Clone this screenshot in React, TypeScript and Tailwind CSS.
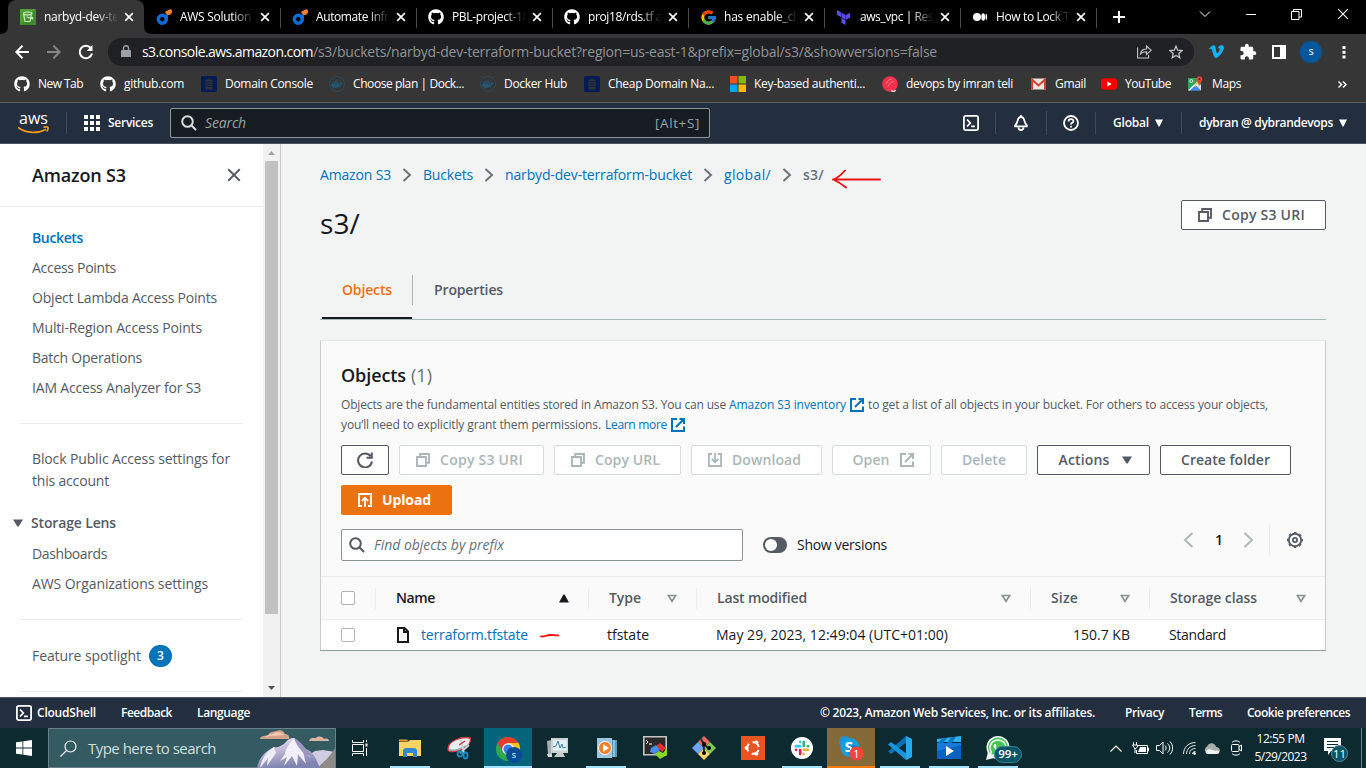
import { useLayoutEffect, useRef, useState } from "react";
import type { ReactNode } from "react";
import { FaDocker, FaGithub, FaVimeoV, FaWhatsapp } from "react-icons/fa";
import { MdExtension } from "react-icons/md";
import { FcGoogle } from "react-icons/fc";
import { SiTerraform } from "react-icons/si";

/* One line of text whose tracking is adjusted so that it fills exactly `w` pixels. */
function Fit({ w, className = "", children }: { w: number; className?: string; children: string }) {
  const ref = useRef<HTMLSpanElement>(null);
  const [spacing, setSpacing] = useState(0);
  useLayoutEffect(() => {
    const el = ref.current;
    if (!el) return;
    const natural = el.getBoundingClientRect().width;
    setSpacing((w - natural) / children.length);
  }, [w, children]);
  return (
    <span className={`block shrink-0 overflow-visible whitespace-nowrap ${className}`} style={{ width: w }}>
      <span ref={ref} className="inline-block whitespace-pre" style={{ letterSpacing: spacing }}>
        {children}
      </span>
    </span>
  );
}

/* ---------- browser chrome ---------- */

const Ocean = () => (
  <svg width="16" height="16" viewBox="0 0 16 16">
    <circle cx="6.300" cy="10.200" r="3.900" fill="none" stroke="#0c6ad8" strokeWidth="3.600" />
    <path d="M8.500 5.500h3.500v6H8.500z" fill="#0c6ad8" />
    <circle cx="6.300" cy="10.400" r="2" fill="#000" />
    <path d="M9.500 2.500 14 .3c1.500-.5 2 .8 2 2.300C16 5 14.500 6 12.800 6 10.500 6 9 4.500 9.500 2.500z" fill="#ff8126" />
  </svg>
);

const Bucket = () => (
  <svg width="16" height="16" viewBox="0 0 16 16">
    <path d="M0 0h16v16H0z" fill="#3c8c2a" />
    <path d="M0 0h16L0 16z" fill="#4fa034" />
    <path d="M3.500 4.500 5 12.500h5l1.500-8M3.500 4.500c0-2 8.500-2 8.500 0s-8.500 1.700-8.500 0zM7 8l5 1.800c1.500.3 1-.8-.5-1.800" fill="none" stroke="#d3edc9" strokeWidth="1.100" />
  </svg>
);

const MediumDots = () => (
  <svg width="16" height="16" viewBox="0 0 16 16" fill="#fff">
    <circle cx="5" cy="8" r="4" />
    <ellipse cx="11.200" cy="8" rx="1.900" ry="3.700" />
    <ellipse cx="14.300" cy="8" rx=".8" ry="3.300" />
  </svg>
);

const Cross = ({ size = 8, weight = 1.7 }: { size?: number; weight?: number }) => (
  <svg width={size} height={size} viewBox="0 0 10 10" stroke="currentColor" strokeWidth={weight * (10 / size)} fill="none" className="shrink-0 overflow-visible">
    <path d="M.2.2l9.600 9.600M9.800.2l-9.600 9.600" />
  </svg>
);

const gh = <FaGithub size={16} color="#fff" />;

const tabs: { icon: ReactNode; label: string; w: number }[] = [
  { icon: <Bucket />, label: "narbyd-dev-terr", w: 84 },
  { icon: <Ocean />, label: "AWS Solution", w: 71 },
  { icon: <Ocean />, label: "Automate Infra", w: 79 },
  { icon: gh, label: "PBL-project-18", w: 77 },
  { icon: gh, label: "proj18/rds.tf at", w: 78 },
  { icon: <FcGoogle size={17} />, label: "has enable_clas", w: 84 },
  { icon: <SiTerraform size={15} color="#5c4ee5" />, label: "aws_vpc | Reso", w: 80 },
  { icon: <MediumDots />, label: "How to Lock Te", w: 80 },
];

function TabStrip() {
  return (
    <div className="flex h-[34px] shrink-0 bg-black pl-2">
      {tabs.map((t, i) => (
        <div
          key={t.label}
          className={`relative flex h-[34px] w-[136px] shrink-0 items-center pl-3 ${i === 0 ? "rounded-t-lg bg-[#363636]" : ""}`}
        >
          <span className="flex w-6 shrink-0">{t.icon}</span>
          <span className="w-[74px] shrink-0 overflow-hidden text-xs text-white [mask-image:linear-gradient(to_right,black_70%,transparent_100%)]">
            <Fit w={t.w}>{t.label}</Fit>
          </span>
          <span className="ml-[7px] flex text-white"><Cross /></span>
          {i > 0 && <span className="absolute top-2 right-[-1px] h-5 w-px bg-[#4a4a4a]" />}
          {i === 0 && (
            <svg className="absolute bottom-0 -left-2" width="152" height="8" viewBox="0 0 152 8" fill="#363636">
              <path d="M0 8Q8 8 8 0V8zM152 8Q144 8 144 0V8z" />
            </svg>
          )}
        </div>
      ))}
      <svg className="mt-[11px] ml-[17px]" width="12" height="12" viewBox="0 0 12 12" stroke="#fff" strokeWidth="2">
        <path d="M6 0v12M0 6h12" />
      </svg>
      <svg className="mt-[11px] ml-[74px]" width="12" height="8" viewBox="0 0 12 8" stroke="#fff" fill="none">
        <path d="M1 .5l5 5 5-5" />
      </svg>
      <svg className="mt-[14px] ml-[35px]" width="10" height="1" viewBox="0 0 10 1" fill="#fff"><path d="M0 0h10v1H0z" /></svg>
      <svg className="mt-[9px] ml-[35px]" width="11" height="11" viewBox="0 0 11 11" stroke="#fff" fill="none">
        <path d="M.5 2.500h7.500v8H.5zM2.500 2.500V.5h8v7.500H8" />
      </svg>
      <span className="mt-[9px] ml-[36px] text-white"><Cross size={10} weight={1.1} /></span>
    </div>
  );
}

function Toolbar() {
  return (
    <div className="flex h-[35px] shrink-0 items-center bg-[#363636] pl-[15px]">
      <svg width="14" height="14" viewBox="0 0 14 14" fill="none" stroke="#fff" strokeWidth="2"><path d="M14 7H1.500M7.500.8 1.300 7l6.200 6.200" /></svg>
      <svg className="ml-[18px]" width="14" height="14" viewBox="0 0 14 14" fill="none" stroke="#868686" strokeWidth="2"><path d="M0 7h12.500M6.500.8 12.700 7l-6.200 6.200" /></svg>
      <svg className="ml-[17px]" width="16" height="16" viewBox="0 0 16 16" fill="none" stroke="#fff" strokeWidth="2"><path d="M12.700 4A6.200 6.200 0 1 0 14 9.500" /><path d="M14.500 1v6h-6z" fill="#fff" stroke="none" /></svg>
      <div className="ml-[14px] flex h-7 w-[1086px] items-center rounded-full bg-[#202124] pl-[13px]">
        <svg width="10" height="13" viewBox="0 0 10 13" fill="#9aa0a6"><path d="M1 5h8a1 1 0 0 1 1 1v6H0V6a1 1 0 0 1 1-1z" /><path d="M2.500 5V3.200a2.500 2.500 0 0 1 5 0V5" fill="none" stroke="#9aa0a6" strokeWidth="1.400" /></svg>
        <Fit w={171} className="ml-[11px] text-sm text-white">s3.console.aws.amazon.com</Fit>
        <Fit w={624} className="text-sm text-[#929395]">/s3/buckets/narbyd-dev-terraform-bucket?region=us-east-1&amp;prefix=global/s3/&amp;showversions=false</Fit>
        <svg className="ml-[200px]" width="15" height="15" viewBox="0 0 15 15" fill="none" stroke="#c4c5c7" strokeWidth="1.100"><path d="M.6 3.500v10.500h11v-3M3.500 10C4 6.500 6.500 5 9.500 5V2l4.700 4.300-4.700 4.200V7.800C7 7.800 5 8.300 3.500 10z" /></svg>
        <svg className="ml-[17px]" width="14" height="14" viewBox="0 0 24 24" fill="none" stroke="#c4c5c7" strokeWidth="2.200"><path d="M12 2l3 7 7.500.700-5.700 5 1.700 7.300-6.500-3.900L5.500 22l1.700-7.300-5.700-5L9 9z" /></svg>
      </div>
      <FaVimeoV className="ml-[14px]" size={17} color="#13b1ef" />
      <MdExtension className="ml-[14px]" size={18} color="#fff" />
      <svg className="ml-[15px]" width="14" height="14" viewBox="0 0 14 14" fill="#fff"><path fillRule="evenodd" d="M0 0h14v14H0zM2 2v10h6V2z" /></svg>
      <span className="ml-[14px] flex size-[22px] items-center justify-center rounded-full bg-[#01579b] pb-px text-[11px] text-white">s</span>
      <svg className="ml-5" width="4" height="14" viewBox="0 0 4 14" fill="#fff"><path d="M.5 1h3v3h-3zM.5 5.700h3v3h-3zM.5 10.500h3v3h-3z" /></svg>
    </div>
  );
}

const Namecheap = () => (
  <svg width="16" height="16" viewBox="0 0 16 16">
    <rect width="16" height="16" rx="2" fill="#031a52" />
    <path d="M5 4h6v9H5zM6.500 3h3" fill="#303238" stroke="#303238" />
    <path d="M5 6h6M5 8.200h6M5 10.500h6" stroke="#031a52" strokeWidth=".7" />
  </svg>
);

const DockerBadge = () => (
  <span className="flex size-4 items-center justify-center rounded-full border border-[#2b4a5e]"><FaDocker size={12} color="#255370" /></span>
);

const bookmarks: { icon: ReactNode; label: string; w: number; cell: string }[] = [
  { icon: gh, label: "New Tab", w: 45, cell: "w-[86px]" },
  { icon: gh, label: "github.com", w: 60, cell: "w-[101px]" },
  { icon: <Namecheap />, label: "Domain Console", w: 88, cell: "w-[128px]" },
  { icon: <DockerBadge />, label: "Choose plan | Dock...", w: 111, cell: "w-[151px]" },
  { icon: <DockerBadge />, label: "Docker Hub", w: 63, cell: "w-[104px]" },
  { icon: <Namecheap />, label: "Cheap Domain Na...", w: 106, cell: "w-[146px]" },
  {
    icon: (
      <svg width="16" height="16" viewBox="0 0 16 16"><path d="M0 0h7.500v7.500H0z" fill="#f25022" /><path d="M8.500 0H16v7.500H8.500z" fill="#7fba00" /><path d="M0 8.500h7.500V16H0z" fill="#00a4ef" /><path d="M8.500 8.500H16V16H8.500z" fill="#ffb900" /></svg>
    ),
    label: "Key-based authenti...", w: 111, cell: "w-[152px]",
  },
  {
    icon: (
      <svg width="16" height="16" viewBox="0 0 16 16"><circle cx="8" cy="8" r="7.800" fill="#f3304c" /><path d="M4 8c1-3 3-4.500 6-5M6 10.500c1-3 3-4.500 6-5" stroke="#fa8b9a" strokeWidth=".8" fill="none" /><path d="M9 14.500c2 1.500 4 1 4.500-.5" stroke="#dbe6e8" strokeWidth="1.300" fill="none" /></svg>
    ),
    label: "devops by imran teli", w: 107, cell: "w-[149px]",
  },
  {
    icon: (
      <svg width="15" height="16" viewBox="0 0 15 16"><path d="M0 2.500h15v11H0z" fill="#e9e7e3" /><path d="M1 13.500v-10l6.500 6 6.500-6v10" fill="none" stroke="#d93f33" strokeWidth="2" /></svg>
    ),
    label: "Gmail", w: 31, cell: "w-[70px]",
  },
  {
    icon: <svg width="16" height="16" viewBox="0 0 16 16"><rect y="2.300" width="16" height="11.500" rx="3" fill="#f00" /><path d="M6.300 5.600v5l4.400-2.500z" fill="#fff" /></svg>,
    label: "YouTube", w: 46, cell: "w-[87px]",
  },
  {
    icon: (
      <svg width="15" height="16" viewBox="0 0 15 16"><path d="M0 2h13v12.500H0z" fill="#2fa35b" /><path d="M0 14.500 6.500 8l6.500 6.500z" fill="#4285f4" /><path d="M5.500 9 12 2.500V7L7 11z" fill="#f3d14d" /><path d="m6.500 8 6.500 6.500V9l-3-1z" fill="#dadce0" /><path d="m0 14.500 6-6 1 1-5 5z" fill="#eef1f3" /><path d="M11.300 10C10.500 7 8.500 6 8.500 3.200a2.900 2.900 0 0 1 5.800 0C14.300 6 12 7 11.300 10z" fill="#e0443a" /><circle cx="11.300" cy="3" r="1" fill="#7a1c1b" /><circle cx="3.300" cy="5" r="1.500" stroke="#fff" fill="none" strokeWidth=".8" /></svg>
    ),
    label: "Maps", w: 29, cell: "w-[150px]",
  },
];

function Bookmarks() {
  return (
    <div className="flex h-[34px] shrink-0 items-center border-b border-[#626262] bg-[#363636] pb-[3px] pl-[14px]">
      {bookmarks.map((b, i) => (
        <div key={i} className={`flex shrink-0 items-center ${b.cell}`}>
          <span className="flex w-6 shrink-0">{b.icon}</span>
          <Fit w={b.w} className="text-xs text-white">{b.label}</Fit>
        </div>
      ))}
      <svg width="9" height="7" viewBox="0 0 9 7" fill="none" stroke="#fff" strokeWidth="1.500"><path d="m.5.5 3 3-3 3M5 .5l3 3-3 3" /></svg>
    </div>
  );
}

/* ---------- AWS console ---------- */

const Caret = ({ className = "", width = 10 }: { className?: string; width?: number }) => (
  <svg className={`shrink-0 ${className}`} width={width} height="8" viewBox="0 0 10 8" preserveAspectRatio="none" fill="currentColor"><path d="M0 .5h10L5.600 7.500H4.400z" /></svg>
);

const ShellIcon = () => (
  <svg className="shrink-0" width="16" height="16" viewBox="0 0 16 16" fill="none" stroke="#fff" strokeWidth="1.800">
    <rect x=".9" y=".9" width="14.200" height="14.200" rx="1.800" /><path d="M4 4.500 7.300 8 4 11.500M8 11.300h4" />
  </svg>
);

const SearchIcon = ({ color }: { color: string }) => (
  <svg className="shrink-0" width="16" height="16" viewBox="0 0 16 16" fill="none" stroke={color} strokeWidth="2"><circle cx="6.500" cy="6.500" r="5.300" /><path d="m10.300 10.300 4.700 4.700" /></svg>
);

const CopyIcon = () => (
  <svg className="shrink-0" width="14" height="14" viewBox="0 0 14 14" fill="none" stroke="currentColor" strokeWidth="1.900"><path d="M1 4h9v9H1zM4.200 4V1H13v8.800h-3" /></svg>
);

const ExternalIcon = ({ className = "" }: { className?: string }) => (
  <svg className={`shrink-0 ${className}`} width="14" height="14" viewBox="0 0 14 14" fill="none" stroke="currentColor" strokeWidth="2"><path d="M6 1H1v12h12V8.500M8.500 1H13v5M13 1 5 9" /></svg>
);

function Header() {
  return (
    <header className="flex h-[41px] shrink-0 items-center border-b border-[#4b5360] bg-[#232f3e] pl-[18px] text-white">
      <div className="mt-px flex w-[31px] flex-col items-center">
        <Fit w={29} className="h-[13px] text-base leading-[11px] font-medium">aws</Fit>
        <svg width="32" height="8" viewBox="0 0 32 8" fill="none" stroke="#f79a1e" strokeWidth="1.700"><path d="M0 1.500c9 6.500 20 6 28 2M25.500 1.200c5-.8 5.500-.4 3.500 4.300" /></svg>
      </div>
      <span className="ml-[17px] h-[22px] w-px bg-[#414b58]" />
      <svg className="ml-[17px]" width="16" height="16" viewBox="0 0 16 16" fill="#fff"><path d="M0 0h4v4H0zM6 0h4v4H6zM12 0h4v4h-4zM0 6h4v4H0zM6 6h4v4H6zM12 6h4v4h-4zM0 12h4v4H0zM6 12h4v4H6zM12 12h4v4h-4z" /></svg>
      <Fit w={45} className="ml-2 text-xs font-semibold">Services</Fit>
      <div className="ml-[17px] flex h-[30px] w-[540px] items-center rounded-xs border border-[#8d9799] bg-[#171b22] pl-[10px]">
        <SearchIcon color="#d8dcdc" />
        <Fit w={41} className="ml-[8px] text-sm text-[#95a5a6] italic">Search</Fit>
        <Fit w={45} className="ml-[409px] text-[13.500px] text-[#95a5a6]">[Alt+S]</Fit>
      </div>
      <div className="ml-[253px] flex"><ShellIcon /></div>
      <span className="ml-[16px] h-[22px] w-px bg-[#414b58]" />
      <svg className="ml-[17px]" width="16" height="16" viewBox="0 0 16 16" fill="none" stroke="#fff" strokeWidth="1.800"><path d="M8 0v1.500M1.300 11.300h13.400M1.600 11.100C3.500 9.500 4 8 4.500 6 5 3.500 6 2 8 2s3 1.500 3.500 4c.5 2 1 3.500 2.900 5.100M5.500 12.500a2.500 2.500 0 0 0 5 0" /></svg>
      <span className="ml-[17px] h-[24px] w-px bg-[#414b58]" />
      <svg className="ml-[16px]" width="16" height="16" viewBox="0 0 16 16" fill="none" stroke="#fff" strokeWidth="1.800"><circle cx="8" cy="8" r="7" /><path d="M5.600 6.500c0-3.200 4.900-3 4.800-.3C10.400 8 8 7.700 8 9.500M8 10.800v1.700" /></svg>
      <span className="ml-[16px] h-[22px] w-px bg-[#414b58]" />
      <Fit w={36} className="ml-[17px] text-xs font-semibold">Global</Fit>
      <Caret className="ml-[6px]" width={8} />
      <span className="ml-[18px] h-[22px] w-px bg-[#414b58]" />
      <Fit w={134} className="ml-[17px] text-xs font-semibold">dybran @ dybrandevops</Fit>
      <Caret className="ml-[6px]" width={8} />
    </header>
  );
}

const navTop: [string, number][] = [
  ["Access Points", 84],
  ["Object Lambda Access Points", 185],
  ["Multi-Region Access Points", 170],
  ["Batch Operations", 110],
  ["IAM Access Analyzer for S3", 169],
];

function Sidebar() {
  return (
    <aside className="flex h-[553px] w-[281px] shrink-0 bg-white text-sm text-[#545b64]">
      <div className="h-full w-[263px] overflow-hidden">
        <div className="flex h-[63px] items-center justify-between border-b border-[#eaeded] pr-[23px] pl-8 text-[#545b64]">
          <Fit w={94} className="-mt-px text-lg font-semibold text-[#16191f]">Amazon S3</Fit>
          <Cross size={12} weight={1.9} />
        </div>
        <div className="mt-[16px] flex h-[30px] items-center pl-8"><Fit w={51} className="font-semibold text-[#0073bb]">Buckets</Fit></div>
        {navTop.map(([label, w]) => (
          <div key={label} className="flex h-[30px] items-center pl-8"><Fit w={w}>{label}</Fit></div>
        ))}
        <div className="mx-5 mt-[20px] h-px bg-[#eaeded]" />
        <div className="mt-[24px] pl-8 leading-[22px]">
          <Fit w={198}>Block Public Access settings for</Fit>
          <Fit w={77}>this account</Fit>
        </div>
        <div className="mt-[16px] flex h-[30px] items-center pl-[13px]">
          <Caret />
          <Fit w={85} className="ml-2 font-semibold">Storage Lens</Fit>
        </div>
        <div className="mt-px flex h-[30px] items-center pl-8"><Fit w={75}>Dashboards</Fit></div>
        <div className="flex h-[30px] items-center pl-8"><Fit w={176}>AWS Organizations settings</Fit></div>
        <div className="mx-5 mt-[20px] h-px bg-[#eaeded]" />
        <div className="mt-[24px] flex h-[24px] items-center pl-8">
          <Fit w={109} className="-mt-px">Feature spotlight</Fit>
          <span className="ml-2 flex h-[22px] w-[23px] items-center justify-center rounded-full bg-[#0073bb] text-xs font-semibold text-white">3</span>
        </div>
        <div className="mx-5 mt-[23px] h-px bg-[#eaeded]" />
      </div>
      <div className="flex w-[17px] flex-col items-center bg-[#f1f1f1]">
        <svg className="mt-[7px]" width="7" height="4" viewBox="0 0 7 4" fill="#a3a3a3"><path d="M0 4 3.500 0 7 4z" /></svg>
        <div className="mt-[6px] h-[453px] w-[13px] bg-[#c1c1c1]" />
        <svg className="mt-[72px]" width="7" height="4" viewBox="0 0 7 4" fill="#505050"><path d="M0 0h7L3.500 4z" /></svg>
      </div>
      <div className="w-px bg-[#c5caca]" />
    </aside>
  );
}

const Chevron = () => (
  <svg className="w-8 shrink-0" height="14" viewBox="0 0 32 14" fill="none" stroke="#687078" strokeWidth="1.900"><path d="m12.500 1 6.500 6-6.500 6" /></svg>
);

function Button({ w, tw, icon, after, children, disabled }: { w: string; tw: number; icon?: ReactNode; after?: ReactNode; children: string; disabled?: boolean }) {
  return (
    <button className={`flex h-[30px] shrink-0 items-center justify-center rounded-xs border bg-white text-sm font-semibold ${w} ${icon ? "pr-1" : ""} ${after ? "pl-[3px]" : ""} ${disabled ? "border-[#d5dbdb] text-[#aab7b8]" : "border-[#545b64] text-[#545b64]"}`}>
      {icon && <span className="mr-[10px] flex">{icon}</span>}
      <Fit w={tw} className="text-left">{children}</Fit>
      {after}
    </button>
  );
}

const Sort = ({ up }: { up?: boolean }) => (
  <svg className="shrink-0" width="10" height="9" viewBox="0 0 10 9" fill="none" stroke="#879596" strokeWidth="1.700">
    {up ? <path d="M0 8.500 4.400.5h1.200L10 8.500z" fill="#16191f" stroke="none" /> : <path d="M1.300 1.500h7.400L5 7.300z" />}
  </svg>
);

function HeadCell({ label, w, cell, up, last }: { label: string; w: number; cell: string; up?: boolean; last?: boolean }) {
  return (
    <div className={`flex h-[21px] shrink-0 items-center justify-between border-l border-[#eaeded] pl-5 ${last ? "pr-[18px]" : "pr-[19px]"} ${cell} ${up ? "text-[#16191f]" : "text-[#545b64]"}`}>
      <Fit w={w} className="font-semibold">{label}</Fit>
      <Sort up={up} />
    </div>
  );
}

const Box = () => <span className="-mt-px size-[14px] shrink-0 rounded-xs border border-[#aab7b8] bg-white" />;

function ObjectsCard() {
  return (
    <section className="mt-[20px] h-[311px] w-[1006px] border border-t-[#e6e9e9] border-r-[#c9cfcf] border-b-2 border-l-[#c9cfcf] border-b-[#8e9b9b] bg-[#fafafa] text-sm text-[#16191f]">
      <div className="flex h-[67px] items-center pl-5">
        <Fit w={65} className="text-lg font-semibold">Objects</Fit>
        <Fit w={21} className="ml-[5px] text-lg text-[#687078]">(1)</Fit>
      </div>
      <div className="-mt-[13px] pl-5 text-xs text-[#545b64]">
        <div className="flex h-5 items-center">
          <Fit w={385}>Objects are the fundamental entities stored in Amazon S3. You can use</Fit>
          <span className="ml-[3px] flex items-center text-[#0073bb]"><Fit w={117}>Amazon S3 inventory</Fit><ExternalIcon className="ml-[4px]" /></span>
          <Fit w={400} className="ml-[4px]">to get a list of all objects in your bucket. For others to access your objects,</Fit>
        </div>
        <div className="flex h-5 items-center">
          <Fit w={260}>you’ll need to explicitly grant them permissions.</Fit>
          <span className="ml-[4px] flex items-center text-[#0073bb]"><Fit w={62}>Learn more</Fit><ExternalIcon className="ml-[4px]" /></span>
        </div>
      </div>
      <div className="mt-[10px] flex flex-wrap gap-[10px] pl-5">
        <button className="flex h-[30px] w-12 items-center justify-center rounded-xs border border-[#545b64] bg-white">
          <svg width="16" height="16" viewBox="0 0 16 16" fill="none" stroke="#545b64" strokeWidth="2"><path d="M15 9.500A7 7 0 1 1 13.700 4.200M14.800.5v5.300H9.500" /></svg>
        </button>
        <Button w="w-[145px]" tw={83} disabled icon={<CopyIcon />}>Copy S3 URI</Button>
        <Button w="w-[127px]" tw={65} disabled icon={<CopyIcon />}>Copy URL</Button>
        <Button w="w-[131px]" tw={69} disabled icon={<svg width="14" height="14" viewBox="0 0 14 14" fill="none" stroke="currentColor" strokeWidth="1.800"><path d="M4 1H1v12h12V1h-3M7 0v9M3.800 6 7 9.300 10.200 6" /></svg>}>Download</Button>
        <Button w="w-[99px]" tw={37} disabled after={<ExternalIcon className="ml-[10px]" />}>Open</Button>
        <Button w="w-[86px]" tw={44} disabled>Delete</Button>
        <Button w="w-[113px]" tw={51} after={<Caret className="ml-3" />}>Actions</Button>
        <Button w="w-[131px]" tw={89}>Create folder</Button>
        <button className="flex h-[30px] w-[111px] items-center rounded-xs bg-[#ec7211] pl-[17px] text-sm font-bold text-white">
          <svg width="14" height="14" viewBox="0 0 14 14" fill="none" stroke="#fff" strokeWidth="1.800"><path d="M4 13H1V1h12v12h-3M7 14V5M3.800 8 7 4.700 10.200 8" /></svg>
          <Fit w={49} className="ml-[10px] text-left">Upload</Fit>
        </button>
      </div>
      <div className="mt-[14px] flex h-8 items-center pl-5">
        <div className="flex h-8 w-[402px] items-center rounded-xs border border-[#879596] bg-white pl-[7px]">
          <SearchIcon color="#545b64" />
          <Fit w={130} className="ml-[9px] text-[#687078] italic">Find objects by prefix</Fit>
        </div>
        <span className="ml-5 flex h-4 w-6 items-center rounded-full bg-[#545b64] pl-0.5"><span className="size-3 rounded-full bg-white" /></span>
        <Fit w={90} className="ml-[10px]">Show versions</Fit>
        <div className="ml-[296px] flex h-[30px] -translate-y-[5px] items-center">
          <svg width="11" height="16" viewBox="0 0 11 16" fill="none" stroke="#aab7b8" strokeWidth="1.900"><path d="M9.500 1 2 8l7.500 7" /></svg>
          <Fit w={8} className="ml-[21px] font-semibold">1</Fit>
          <svg className="ml-[20px]" width="11" height="16" viewBox="0 0 11 16" fill="none" stroke="#aab7b8" strokeWidth="1.900"><path d="M1.500 1 9 8l-7.500 7" /></svg>
          <span className="ml-[15px] h-[30px] w-px bg-[#eaeded]" />
          <svg className="ml-[17px]" width="16" height="16" viewBox="0 0 16 16" fill="none" stroke="#545b64">
            <circle cx="8" cy="8" r="6.200" strokeWidth="1.900" />
            <circle cx="8" cy="8" r="7.400" strokeWidth="1.200" strokeDasharray="2.700 3.112" strokeDashoffset="1.350" />
            <circle cx="8" cy="8" r="2.100" strokeWidth="1.800" />
          </svg>
        </div>
      </div>
      <div className="mt-[15px] flex h-[44px] items-center border-y border-[#eaeded]">
        <div className="flex w-[54px] shrink-0 pl-5"><Box /></div>
        <HeadCell label="Name" w={39} cell="w-[213px]" up />
        <HeadCell label="Type" w={32} cell="w-[108px]" />
        <HeadCell label="Last modified" w={90} cell="w-[334px]" />
        <HeadCell label="Size" w={27} cell="w-[119px]" />
        <HeadCell label="Storage class" w={87} cell="w-[175px]" last />
      </div>
      <div className="flex h-[30px] items-center bg-white">
        <div className="flex w-[76px] shrink-0 pl-5"><Box /></div>
        <div className="flex w-[211px] shrink-0 items-center">
          <svg width="12" height="16" viewBox="0 0 12 16" fill="none" stroke="#16191f" strokeWidth="2"><path d="M1 1h6.500L11 4.500V15H1zM7 1v4h4" /></svg>
          <Fit w={107} className="ml-[12px] text-[#0073bb]">terraform.tfstate</Fit>
          <svg className="ml-[12px]" width="20" height="6" viewBox="0 0 20 6" fill="none" stroke="#f50e0e" strokeWidth="1.800" strokeLinecap="round"><path d="M1 4.500c5 0 6-1.500 9-1.500s5 .5 8.500.3" /></svg>
        </div>
        <Fit w={42} className="-ml-px">tfstate</Fit>
        <Fit w={232} className="ml-[67px]">May 29, 2023, 12:49:04 (UTC+01:00)</Fit>
        <Fit w={57} className="ml-[125px]">150.7 KB</Fit>
        <Fit w={57} className="ml-[39px]">Standard</Fit>
      </div>
    </section>
  );
}

function Main() {
  return (
    <main className="h-[553px] flex-1 bg-[#f2f3f3] pt-[21px] pl-[39px]">
      <nav className="flex h-5 items-center text-sm text-[#0073bb]">
        <Fit w={71}>Amazon S3</Fit><Chevron />
        <Fit w={50}>Buckets</Fit><Chevron />
        <Fit w={187}>narbyd-dev-terraform-bucket</Fit><Chevron />
        <Fit w={47}>global/</Fit><Chevron />
        <Fit w={21} className="font-semibold text-[#687078]">s3/</Fit>
        <svg className="mt-[7px] ml-[8px]" width="50" height="20" viewBox="0 0 50 20" fill="none" stroke="#f01313" strokeWidth="1.900" strokeLinecap="round"><path d="M1 10.500h47M13 1.500C10 5 6 8.500 1.500 10.500c4 2 8 4.500 12.500 8" /></svg>
      </nav>
      <div className="mt-[15px] flex h-[51px] w-[1006px] justify-between">
        <Fit w={40} className="mt-[3px] text-[28px] leading-[40px] text-[#16191f]">s3/</Fit>
        <Button w="w-[145px]" tw={83} icon={<CopyIcon />}>Copy S3 URI</Button>
      </div>
      <div className="mt-[13px] flex h-[56px] w-[1006px] border-b border-[#aab7b8] pl-0.5 text-sm font-semibold">
        <div className="-mb-px flex h-[55px] w-[90px] items-center justify-center border-b-2 border-[#16191f] pt-[5px] pb-[7px] text-[#ec7211]">
          <Fit w={50}>Objects</Fit>
        </div>
        <span className="mt-[11px] h-[30px] w-px bg-[#aab7b8]" />
        <div className="ml-[21px] flex h-[55px] items-center pt-[5px] pb-[9px] text-[#545b64]"><Fit w={69}>Properties</Fit></div>
      </div>
      <ObjectsCard />
    </main>
  );
}

function Footer() {
  return (
    <footer className="flex h-[31px] shrink-0 items-center border-t border-[#4b5360] bg-[#232f3e] pl-4 text-xs font-semibold text-white">
      <ShellIcon />
      <Fit w={59} className="ml-[5px]">CloudShell</Fit>
      <Fit w={51} className="ml-[25px]">Feedback</Fit>
      <Fit w={53} className="ml-[25px]">Language</Fit>
      <Fit w={275} className="ml-[570px]">© 2023, Amazon Web Services, Inc. or its affiliates.</Fit>
      <Fit w={39} className="ml-[30px]">Privacy</Fit>
      <Fit w={33} className="ml-[25px]">Terms</Fit>
      <Fit w={103} className="ml-[25px]">Cookie preferences</Fit>
    </footer>
  );
}

/* ---------- taskbar ---------- */

const Mountains = () => (
  <svg width="78" height="38" viewBox="0 0 78 38">
    <defs>
      <linearGradient id="peak" x1="0" y1="0" x2="0.300" y2="1">
        <stop offset="0" stopColor="#ece8f5" /><stop offset=".45" stopColor="#c3bad9" /><stop offset="1" stopColor="#7f83ae" />
      </linearGradient>
    </defs>
    <path d="M3 9c0-3 5-4 8-3 1-5 6-4 8-5 5-2 8 0 9 3 4 0 5 4 4 5z" fill="#d3a28c" />
    <path d="M8 7c2-3 6-2 8-3 3-3 9-2 11 1-4 1-12 0-19 2z" fill="#f2c9ad" />
    <path d="M52 11c1-4 5-3 7-3 2-2 6-2 8 1 3-1 5 0 5 2z" fill="#dcb49d" />
    <path d="M44 30 58 21l8-1 12 2v16H44z" fill="#cfcbe0" />
    <path d="M0 38c2-10 7-16 17-21 4 1 7-1 11-4 4-5 7-5 9-5 6 4 8 10 16 13 6 6 7 11 10 17z" fill="url(#peak)" />
    <path d="M37 8c-4 6-8 9-9 16l-5 7 7-4-3 9 8-10 5 10 1-12 8 10-3-12 8 5c-6-6-10-14-17-19z" fill="#f3f0fa" />
    <path d="M17 17C9 22 5 28 3 38l8-10-1 8 9-13z" fill="#efecf6" />
    <path d="M37 8c2 7 7 12 11 17l7 1c-6-6-10-14-18-18z" fill="#9c96bf" />
    <path d="M61 38c4-6 10-8 17-20v20z" fill="#8e8a89" />
  </svg>
);

const Chrome = () => (
  <svg width="26" height="26" viewBox="0 0 26 26">
    <circle cx="12" cy="12" r="12" fill="#2da94f" />
    <path d="M12 12 1.600 6A12 12 0 0 1 22.400 6z" fill="#e33b2e" />
    <path d="M12 6h10.400A12 12 0 0 1 12 24l5-9z" fill="#fcc31e" />
    <path d="M1.600 6 7 15l5-9z" fill="#e33b2e" />
    <circle cx="12" cy="12" r="5.800" fill="#fff" /><circle cx="12" cy="12" r="4.600" fill="#3b7ded" />
    <circle cx="18" cy="18" r="8" fill="#074d94" />
    <text x="18" y="21" fontSize="9" textAnchor="middle" fill="#fff">s</text>
  </svg>
);

const Slack = () => (
  <svg width="22" height="22" viewBox="0 0 22 22" strokeWidth="2.700" strokeLinecap="round">
    <circle cx="11" cy="11" r="11" fill="#fff" />
    <path d="M5 9.200h4" stroke="#36c5f0" /><path d="M9.200 4.900v.1" stroke="#36c5f0" />
    <path d="M12.800 5v4" stroke="#2eb67d" /><path d="M17 9.200h.1" stroke="#2eb67d" />
    <path d="M13 12.800h4" stroke="#ecb22e" /><path d="M12.800 17v.1" stroke="#ecb22e" />
    <path d="M9.200 13v4" stroke="#e01e5a" /><path d="M5 12.800h.1" stroke="#e01e5a" />
  </svg>
);

const apps: { bg?: string; line?: string; icon: ReactNode }[] = [
  {
    line: "bg-[#a3e3ff] w-10",
    icon: <svg width="22" height="19" viewBox="0 0 22 19"><path d="M0 .5h8l2 2H0z" fill="#e3a01a" /><path d="M0 3h9l2-2h11v16H0z" fill="#fdd367" /><path d="M4 18v-7l2-2h10l2 2v7h-4v-4H8v4z" fill="#3288d2" /></svg>,
  },
  {
    icon: <svg width="25" height="24" viewBox="0 0 25 24"><path d="M1 13C1 5 15 0 23 2c2 5-4 11-14 13-4 1-8 1-8-2z" fill="#e9edf0" stroke="#d13c42" strokeWidth="1.300" /><path d="M2 13.500c4 2 12 0 17-4" stroke="#9ba8b2" strokeWidth="1.500" fill="none" /><path d="m14 4 3 13M22 9l-9 8" stroke="#c9cfd4" strokeWidth="1.800" /><path d="m12 9 6-4" stroke="#d13c42" strokeWidth="1.500" /><circle cx="13" cy="18" r="2.500" fill="none" stroke="#208bc6" strokeWidth="1.800" /><ellipse cx="18.500" cy="19.500" rx="2" ry="3" fill="none" stroke="#208bc6" strokeWidth="1.800" /></svg>,
  },
  { bg: "bg-[#07657b]", line: "bg-[#a3e3ff] w-12", icon: <span className="mt-[3px] ml-[2px]"><Chrome /></span> },
  {
    icon: <svg width="23" height="22" viewBox="0 0 23 22"><path d="M1 4l5-1v15H2z" fill="#a9afaf" /><path d="M5 1h17v15H5z" fill="#cbd2d4" /><path d="M7 3h13.500v10.500H7z" fill="#e3f0f7" /><path d="m7 10 3-1 2-5 2 7 2-4 1 4 3-1" fill="none" stroke="#3d7fae" /><path d="M11 16h6l2 4H8z" fill="#c5caca" /><path d="M1 17h5v3H2z" fill="#d4d8d8" /></svg>,
  },
  {
    line: "bg-[#a3e3ff] w-10",
    icon: <svg width="21" height="20" viewBox="0 0 21 20"><path d="M1 0h15v20H1z" fill="#9cc6df" /><path d="M16 2h5v17h-5z" fill="#519cbc" /><path d="M18 2v17" stroke="#cce8ef" /><circle cx="9" cy="10" r="6.500" fill="#f48024" stroke="#fff" /><path d="M7 6v8l6-4z" fill="#fff" /></svg>,
  },
  {
    icon: <svg width="25" height="24" viewBox="0 0 25 24"><path d="M.8.8h22.400v18H.8z" fill="#292929" stroke="#c5c5c5" strokeWidth="1.600" /><path d="m3 4 2 2-2 2M6 8h3" stroke="#fff" fill="none" /><path d="m13 10 4-3 6 5-4 4z" fill="#e63028" /><path d="m8 12 5-3 4 5-5 4-5-2z" fill="#4a8bf0" /><path d="m12 18 4-3 4 2 4-5v7l-7 4z" fill="#86d928" /></svg>,
  },
  {
    icon: <svg width="24" height="24" viewBox="0 0 24 24"><path d="m12 0 6 6-6 6-6-6z" fill="#f16a63" /><path d="m6 6 6 6-6 6-6-6z" fill="#70a4f5" /><path d="m18 6 6 6-6 6-6-6z" fill="#7bc94f" /><path d="m12 12 6 6-6 6-6-6z" fill="#ffd667" /><path d="M9 3l3 5v9M12 8l4 4" stroke="#282c32" strokeWidth="1.800" /><circle cx="12" cy="8" r="2" /><circle cx="12" cy="17" r="2" /><circle cx="17" cy="12" r="2" /></svg>,
  },
  { icon: <span className="flex size-6 items-center justify-center bg-[#e95420]"><svg width="20" height="20" viewBox="0 0 20 20" fill="none" stroke="#fff" strokeWidth="2"><circle cx="10" cy="10" r="5.800" strokeDasharray="8.300 3.850" strokeDashoffset="-1.900" /><g fill="#fff" stroke="none"><circle cx="3.500" cy="10" r="1.900" /><circle cx="13.500" cy="4.300" r="1.900" /><circle cx="13.500" cy="15.700" r="1.900" /></g></svg></span> },
  { line: "bg-[#a3e3ff] w-10", icon: <Slack /> },
  {
    bg: "bg-[#866938]", line: "bg-[#ff7a0a] w-12",
    icon: <svg width="26" height="26" viewBox="0 0 26 26"><circle cx="7" cy="7" r="6" fill="#1c94d4" /><circle cx="12" cy="12.500" r="9.500" fill="#159fde" /><circle cx="16" cy="16" r="6" fill="#0d7fc3" /><text x="11" y="17" fontSize="15" fontWeight="700" textAnchor="middle" fill="#fff">S</text><circle cx="18.500" cy="18.500" r="7" fill="#f1453d" /><text x="18.500" y="22.500" fontSize="11" textAnchor="middle" fill="#fff">1</text></svg>,
  },
  {
    line: "bg-[#a3e3ff] w-10",
    icon: <svg width="24" height="24" viewBox="0 0 24 24"><path d="M18 0 24 3v18l-6 3z" fill="#27a9ee" /><path d="M18 0v7L3 18l-3-2.500z" fill="#0870b5" /><path d="m0 8.500 3-2.500 15 11v7z" fill="#1795dc" /><path d="M17.500 7v10L11 12z" fill="#0d2b32" /></svg>,
  },
  {
    line: "bg-[#a3e3ff] w-10",
    icon: <svg width="24" height="24" viewBox="0 0 24 24"><path d="M0 3 24 0v6H0z" fill="#2fb3ef" /><path d="m5 2.500 5-.6L6 7H1zM14 1.300l5-.6L15 7h-5z" fill="#0876c2" /><path d="M0 7h24v16H0z" fill="#167bdc" /><path d="M0 15 24 9v14H0z" fill="#0863c0" /><path d="m9 10 8 5-8 5z" fill="#fff" /></svg>,
  },
  {
    line: "bg-[#a3e3ff] w-10",
    icon: (
      <span className="relative flex size-6">
        <svg width="24" height="24" viewBox="0 0 24 24"><circle cx="12" cy="11.500" r="11.500" fill="#f4f7f5" /><path d="M0 24 2 16l6 6z" fill="#f4f7f5" /><circle cx="12" cy="11.500" r="10" fill="#46c556" /></svg>
        <FaWhatsapp className="absolute top-0.5 left-0.5" size={20} color="#f4f7f5" />
        <span className="absolute top-[10px] left-[8px] flex h-[17px] w-[28px] items-center justify-center rounded-full border border-[#318296] bg-[#0b5566] pb-px text-[11.500px] font-semibold text-white">99+</span>
      </span>
    ),
  },
];

function Taskbar() {
  return (
    <div className="flex h-10 shrink-0 bg-[#0d2a30] text-white">
      <svg className="mt-3 ml-4" width="16" height="16" viewBox="0 0 16 16" fill="#fff"><path d="M0 2.300 6.500 1.400v6.200H0zM7.300 1.300 16 0v7.600H7.300zM0 8.400h6.500v6.200L0 13.700zM7.300 8.400H16V16l-8.700-1.300z" /></svg>
      <div className="ml-4 flex w-72 items-center border border-[#688186] bg-[#345b62] pl-[11px]">
        <svg width="17" height="17" viewBox="0 0 17 17" fill="none" stroke="#f4f6f6" strokeWidth="1.200"><circle cx="10.500" cy="6.500" r="5.500" /><path d="M6.500 10.500.5 16.500" /></svg>
        <Fit w={128} className="ml-[11px] text-[15px] text-[#d5dedf]">Type here to search</Fit>
        <span className="mt-0.5 ml-[41px]"><Mountains /></span>
      </div>
      <svg className="mt-3 ml-4" width="17" height="16" viewBox="0 0 17 16" fill="none" stroke="#fff"><path d="M.5 0v2.500h11V0M.5 16v-2.500h11V16M.5 4.500h11v7H.5zM14.500 0v2M14.500 8v8" /><path d="M13.500 3.500h2v3h-2z" fill="#fff" stroke="none" /></svg>
      <div className="ml-[17px] flex gap-px">
        {apps.map((a, i) => (
          <div key={i} className={`flex h-10 w-12 flex-col items-center ${a.bg ?? ""}`}>
            <div className="flex h-[38px] items-center justify-center pt-[2px]">{a.icon}</div>
            {a.line && <div className={`h-0.5 ${a.line}`} />}
          </div>
        ))}
      </div>
      <div className="ml-[88px] flex items-center">
        <svg width="12" height="7" viewBox="0 0 12 7" fill="none" stroke="#fff" strokeWidth="1.200"><path d="m.5 6.500 5.500-5.500 5.500 5.500" /></svg>
        <svg className="ml-[10px]" width="17" height="13" viewBox="0 0 17 13" fill="none" stroke="#fff"><path d="M6 3.500h9.500v8H4.500V8M15.500 6h1v3h-1M1.500 0v3M4.500 0v3M.5 3h5v2L3 7zM3 7v4" /><path d="M8 5h6v5H6z" fill="#fff" stroke="none" /></svg>
        <svg className="ml-[7px]" width="17" height="14" viewBox="0 0 17 14" fill="none" stroke="#fff"><path d="M.5 4.500h3L7 1v12L3.500 9.500h-3zM9 4.500c1.500 1.500 1.500 3.500 0 5M11.500 2.500c3 3 3 6 0 9M14 .5c3.500 4 3.500 9 0 13" /></svg>
        <svg className="ml-[10px]" width="13" height="14" viewBox="0 0 13 14" fill="none" stroke="#e8eded"><path d="M.5 13C.5 6 6 1.500 12.500 1.500M3.500 13c0-5 4-8.500 9-8.500M6.500 13c0-3.500 2.500-5.500 6-5.500M9.500 13c0-1.500 1-2.500 3-2.500" /><circle cx="11.500" cy="12.500" r="1" fill="#fff" /></svg>
        <svg className="ml-[8px]" width="16" height="11" viewBox="0 0 16 11"><path d="M4 11a4 4 0 0 1-1-7.500C5-1 11-.5 12 4c5 0 5 6.500 1 7z" fill="#a8adad" /><path d="M3 11c-2-2-1-4 2-5l7 2c4-2 4 3 1 3z" fill="#f2f4f4" /></svg>
        <svg className="ml-[10px]" width="13" height="16" viewBox="0 0 13 16" fill="none" stroke="#fff"><rect x="1.500" y="4.500" width="7.500" height="7" rx="1" /><path d="m9 7 2.500-2v6L9 9M2 2.500C4 .3 8 .3 10 2.500M2 13.500c2 2.200 6 2.200 8 0" /></svg>
        <div className="ml-[11px] flex w-[53px] flex-col items-center text-xs leading-[18px]">
          <Fit w={48}>12:55 PM</Fit>
          <Fit w={52}>5/29/2023</Fit>
        </div>
        <span className="relative ml-[17px] h-[20px] w-6">
          <svg width="17" height="17" viewBox="0 0 17 17" fill="#fff"><path fillRule="evenodd" d="M0 0h17v13H7l-3 4v-4H0zM3 3v1h11V3zM3 6v1h11V6zM3 9v1h7V9z" /></svg>
          <span className="absolute top-[7px] left-[7px] flex size-[17px] items-center justify-center rounded-full border border-[#4a8d9c] bg-[#0b5566] text-[11.500px]">11</span>
        </span>
        <span className="ml-[13px] h-10 w-px bg-[#6f8387]" />
      </div>
    </div>
  );
}

export default function App() {
  return (
    <div className="flex h-[768px] w-[1366px] flex-col overflow-hidden font-['Open_Sans','Noto_Sans',sans-serif]">
      <TabStrip />
      <Toolbar />
      <Bookmarks />
      <Header />
      <div className="flex h-[553px] shrink-0">
        <Sidebar />
        <Main />
      </div>
      <Footer />
      <Taskbar />
    </div>
  );
}
